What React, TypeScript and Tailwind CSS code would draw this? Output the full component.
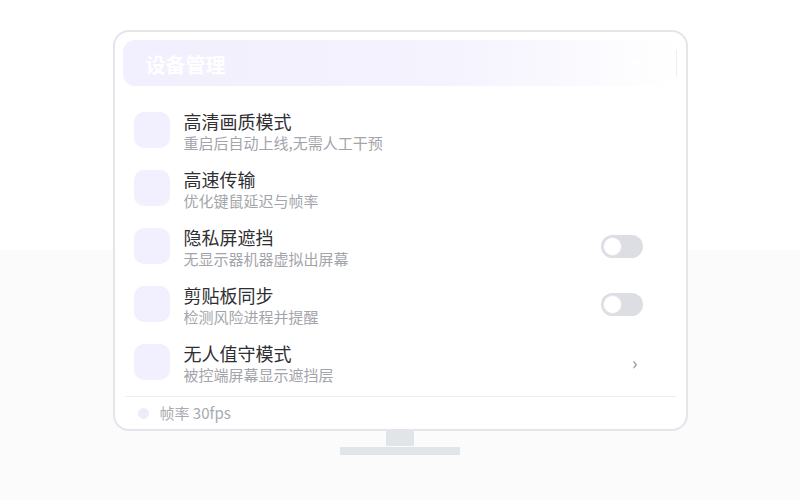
import React from "react";

const rows = [
  { title: "高清画质模式", sub: "重启后自动上线,无需人工干预", right: "none" },
  { title: "高速传输", sub: "优化键鼠延迟与帧率", right: "none" },
  { title: "隐私屏遮挡", sub: "无显示器机器虚拟出屏幕", right: "toggle" },
  { title: "剪贴板同步", sub: "检测风险进程并提醒", right: "toggle" },
  { title: "无人值守模式", sub: "被控端屏幕显示遮挡层", right: "chevron" },
];

function Toggle() {
  return (
    <div className="w-[42px] h-[23px] rounded-full bg-[#dcdee4] p-[2px] flex items-center">
      <div className="w-[19px] h-[19px] rounded-full bg-white border border-[#e6e7eb]" />
    </div>
  );
}

export default function App() {
  return (
    <div
      className="w-[800px] h-[500px] flex flex-col items-center pt-[30px] bg-gradient-to-b from-white from-50% to-[#fbfbfc] to-50%"
      style={{ fontFamily: '"Noto Sans CJK SC", "Noto Sans", sans-serif' }}
    >
      <div className="w-[575px] h-[401px] rounded-[16px] border-2 border-[#e3e5ea] bg-white px-[8px] pt-[8px] flex flex-col">
        <div className="relative h-[46px] shrink-0 rounded-[12px] bg-gradient-to-r from-[#f2effe] via-[#f5f3fe] via-60% to-white/0 flex items-center px-[23px]">
          <span className="text-[20px] font-bold text-white leading-none mt-[3px]">设备管理</span>
          <div className="absolute right-[38px] top-[18px] w-[8px] h-[8px] rounded-full bg-white/80" />
          <div className="absolute right-[1px] top-[10px] w-[1px] h-[27px] bg-[#eeeef4]" />
        </div>
        <div className="mt-[15px] flex flex-col">
          {rows.map((r) => (
            <div key={r.title} className="h-[58px] flex items-center pl-[11px] pr-[35px]">
              <div className="w-[36px] h-[36px] rounded-[10px] bg-[#f2effe] shrink-0" />
              <div className="ml-[14px] flex flex-col flex-1 mt-[2px]">
                <span className="text-[18px] leading-[24px] text-[#2f2f33]">{r.title}</span>
                <span className="text-[15px] leading-[20px] text-[#a3a5ab]">{r.sub}</span>
              </div>
              {r.right === "toggle" && <Toggle />}
              {r.right === "chevron" && (
                <span className="mr-[5px] text-[18px] leading-none text-[#8e9099]">›</span>
              )}
            </div>
          ))}
        </div>
        <div className="mt-[5px] mx-[2px] h-[1px] bg-[#eeeff2]" />
        <div className="h-[32px] flex items-center pl-[15px]">
          <div className="w-[11px] h-[11px] rounded-full bg-[#eeebfd]" />
          <span className="ml-[11px] text-[15px] text-[#a8aab0]">帧率 30fps</span>
        </div>
      </div>
      <div className="w-[28px] h-[15px] bg-[#e1e4e8]" />
      <div className="mt-[1px] w-[120px] h-[8px] bg-[#e1e4e8]" />
    </div>
  );
}
